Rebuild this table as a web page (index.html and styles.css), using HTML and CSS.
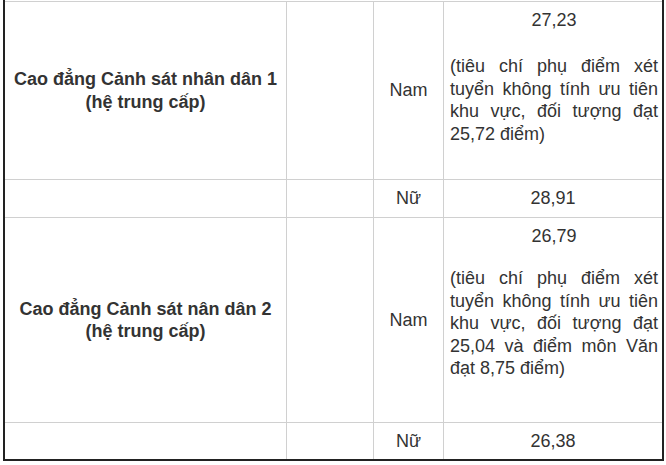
FILE: index.html
```html
<!DOCTYPE html>
<html lang="vi">
<head>
<meta charset="utf-8">
<title>Điểm chuẩn</title>
<link rel="stylesheet" href="styles.css">
</head>
<body>
<div class="frame">
  <table class="scores">
    <colgroup>
      <col class="c-school">
      <col class="c-blank">
      <col class="c-sex">
      <col class="c-score">
    </colgroup>
    <tr class="r-nam1">
      <td class="school">Cao đẳng Cảnh sát nhân dân 1<br>(hệ trung cấp)</td>
      <td></td>
      <td class="sex">Nam</td>
      <td class="score">
        <p class="num num-wide">27,23</p>
        <p class="note">(tiêu chí phụ điểm xét tuyển không tính ưu tiên khu vực, đối tượng đạt 25,72 điểm)</p>
      </td>
    </tr>
    <tr class="r-nu1">
      <td></td>
      <td></td>
      <td class="sex">Nữ</td>
      <td class="single">28,91</td>
    </tr>
    <tr class="r-nam2">
      <td class="school">Cao đẳng Cảnh sát nân dân 2<br>(hệ trung cấp)</td>
      <td></td>
      <td class="sex">Nam</td>
      <td class="score">
        <p class="num">26,79</p>
        <p class="note">(tiêu chí phụ điểm xét tuyển không tính ưu tiên khu vực, đối tượng đạt 25,04 và điểm môn Văn đạt 8,75 điểm)</p>
      </td>
    </tr>
    <tr class="r-nu2">
      <td></td>
      <td></td>
      <td class="sex">Nữ</td>
      <td class="single">26,38</td>
    </tr>
  </table>
</div>
</body>
</html>
```

FILE: styles.css
```css
html, body {
  margin: 0;
  padding: 0;
  background: #ffffff;
}

body {
  font-family: "Liberation Sans", Arial, sans-serif;
  font-size: 18px;
  line-height: 22.4px;
  color: #333333;
}

.frame {
  margin-left: 3px;
  width: 657px;
  border: 2px solid #222222;
  border-top: 0;
  padding-top: 1px;
}

.scores {
  width: 657px;
  table-layout: fixed;
  border-collapse: separate;
  border-spacing: 0;
}

.c-school { width: 281px; }
.c-blank { width: 87px; }
.c-sex { width: 70px; }
.c-score { width: 219px; }

.r-nam1 { height: 178px; }
.r-nu1 { height: 38px; }
.r-nam2 { height: 205px; }
.r-nu2 { height: 37px; }

.scores td {
  border-top: 1px solid #d0d0d0;
  border-left: 1px solid #d0d0d0;
  padding: 7px 5px;
  vertical-align: middle;
  text-align: center;
}

.scores td:first-child {
  border-left: 0;
}

.school {
  font-weight: bold;
}

.scores td.score {
  vertical-align: top;
  padding: 7px 4px 7px 6px;
}

.score p {
  margin: 0;
}

.score .num {
  text-align: center;
  margin-bottom: 20px;
}

.score .num-wide {
  margin-bottom: 24px;
}

.score .note {
  text-align: justify;
}
```
